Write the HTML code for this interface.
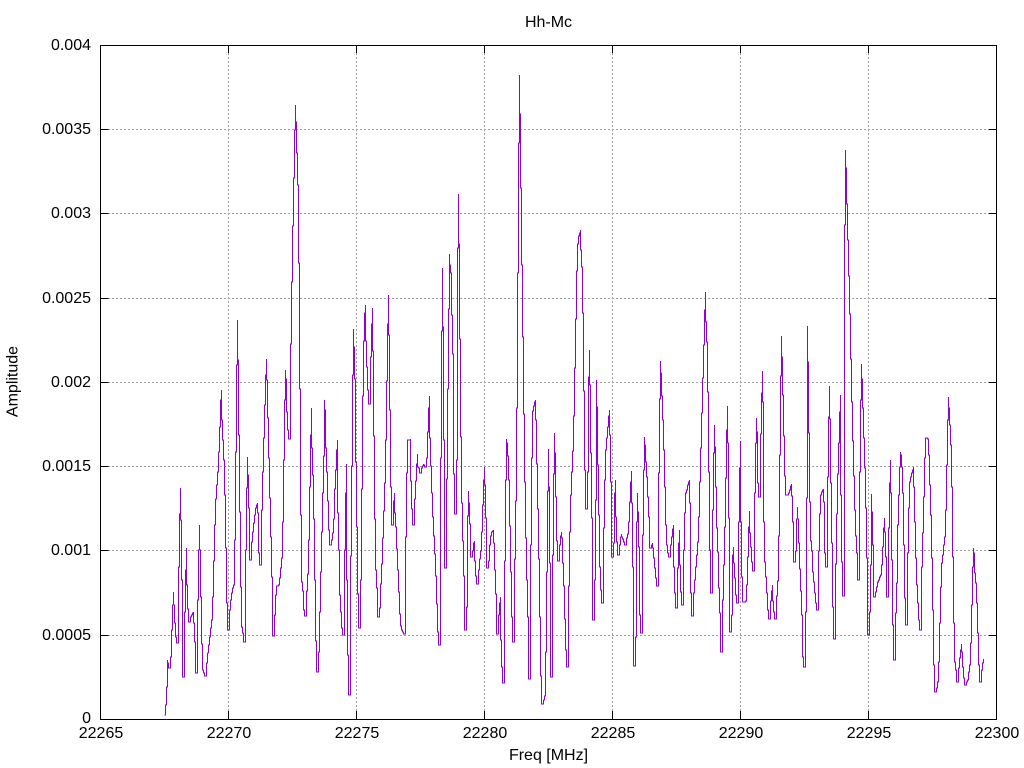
<!DOCTYPE html>
<html>
<head>
<meta charset="utf-8">
<title>Hh-Mc</title>
<style>
html,body{margin:0;padding:0;background:#fff;width:1024px;height:768px;overflow:hidden}
svg{display:block}
text{font-family:"Liberation Sans",sans-serif;font-size:16px;fill:#000}
</style>
</head>
<body>
<svg width="1024" height="768" viewBox="0 0 1024 768" xmlns="http://www.w3.org/2000/svg">
<rect width="1024" height="768" fill="#fff"/>
<g stroke="#a0a0a0" stroke-width="1" stroke-dasharray="2 2" fill="none" shape-rendering="crispEdges">
<path d="M108 129.5H988M108 213.5H988M108 298.5H988M108 382.5H988M108 466.5H988M108 550.5H988M108 635.5H988"/>
<path d="M228.5 53V711M356.5 53V711M484.5 53V711M612.5 53V711M740.5 53V711M868.5 53V711"/>
</g>
<path fill="none" stroke="#9400d3" stroke-width="1" shape-rendering="crispEdges" d="M164.5 715h1V705h1V687h1V660V663h1V668h1h1V657h1V630h1V605h1V592V605h1V623h1V637h1V643h1h1V567h1V514h1V488V520h1V580h1V677h1h1V612h1V570h1V548V585h1V609h1V622h1h1V617h1V615h1V613h1V612V623h1V642h1V673h1h1V600h1V550h1V525V550h1V597h1V644h1V670h1V673h1V676h1h1V663h1V653h1V645h1V637h1V628h1V620h1V597h1V561h1V525h1V499h1V485h1V472h1V452h1V427h1V400h1V390V420h1V440h1V460h1V495h1V548h1V603h1V630h1h1V610h1V600h1V593h1V588h1V585h1V540h1V452h1V365h1V320V360h1V435h1V512h1V587h1V627h1V633h1V642h1h1V550h1V488h1V457V475h1V508h1V560h1h1V542h1V532h1V523h1V515h1V508h1V505h1V503V513h1V553h1V565h1h1V510h1V472h1V438h1V405h1V375h1V359V380h1V418h1V458h1V498h1V537h1V577h1V636h1h1V615h1V595h1V586V586h1h1V585h1V578h1V568h1V558h1V522h1V460h1V400h1V370V379h1V412h1V430h1V439h1h1V344h1V282h1V226h1V178h1V130h1V105V122h1V153h1V185h1V263h1V389h1V515h1V582h1V591h1V610h1V616h1h1V591h1V574h1V540h1V487h1V435h1V408V448h1V475h1V519h1V580h1V641h1V672h1h1V652h1V612h1V572h1V532h1V493h1V456h1V400V410h1V448h1V472h1V501h1V530h1V545h1h1V540h1V533h1V519h1V489h1V470h1V450h1V440V513h1V550h1V595h1V612h1V628h1V635h1h1V550h1V493h1V464V580h1V655h1V695h1h1V556h1V466h1V375h1V329V347h1V379h1V462h1V527h1V594h1V628h1h1V580h1V489h1V396h1V341h1V313h1V305V341h1V367h1V390h1V404h1h1V357h1V324h1V308V351h1V436h1V519h1V570h1V588h1V617h1h1V608h1V584h1V564h1V538h1V511h1V483h1V440h1V381h1V324h1V295V335h1V410h1V487h1V525h1h1V501h1V493V513h1V527h1V549h1V570h1V592h1V614h1V626h1V630h1V632h1V634h1h1V537h1V473h1V440V440h1V440h1h1V439V481h1V509h1V525h1h1V499h1V481h1V464h1V454V467h1V468h1V473h1h1V468h1V466h1V464V465h1V467h1h1V458h1V432h1V408h1V396V438h1V466h1V493h1V517h1V536h1V554h1V576h1V604h1V632h1V645h1h1V458h1V331h1V268V327h1V440h1V568h1h1V479h1V389h1V309h1V254V265h1V273h1V315h1V354h1V474h1V514h1h1V460h1V248h1V194V244h1V339h1V437h1V503h1V541h1V576h1V630h1h1V607h1V516h1V491V503h1V524h1V557h1h1V551h1V543h1V541V561h1V576h1V584h1h1V570h1V559h1V551h1V532h1V505h1V480h1V467V485h1V518h1V568h1h1V561h1V545h1V536h1V532h1V531h1V530V543h1V570h1V594h1V634h1h1V615h1V603h1V597V640h1V667h1V683h1h1V561h1V480h1V439V443h1V456h1V480h1V526h1V572h1V617h1V642h1h1V559h1V501h1V408h1V273h1V143h1V75V114h1V188h1V265h1V337h1V414h1V482h1V538h1V580h1V617h1V679h1h1V545h1V458h1V411h1V406h1V402h1V400V420h1V464h1V509h1V559h1V617h1V676h1V704h1h1V700h1V696h1V652h1V572h1V491h1V449V487h1V563h1V677h1h1V555h1V474h1V433V453h1V497h1V541h1V561h1h1V545h1V536h1V532V538h1V563h1V586h1V619h1V650h1V667h1h1V586h1V532h1V495h1V472h1V451h1V416h1V368h1V319h1V271h1V244h1V236h1V233h1V230V250h1V267h1V313h1V391h1V470h1V509h1h1V472h1V377h1V350V385h1V453h1V518h1V620h1h1V580h1V500h1V380V407h1V465h1V515h1V567h1V590h1V603h1h1V528h1V480h1V450h1V438h1V427h1V416h1V410V435h1V482h1V557h1h1V543h1V493h1V480V517h1V542h1V555h1h1V545h1V537h1V534V537h1V539h1V542h1V545h1h1V538h1V534h1V522h1V502h1V482h1V471V503h1V567h1V666h1h1V637h1V522h1V493V512h1V547h1V615h1V633h1h1V535h1V470h1V437V445h1V462h1V477h1V497h1V517h1V548h1h1V545h1V543V548h1V558h1V568h1V578h1V586h1h1V473h1V399h1V361V373h1V396h1V420h1V450h1V487h1V525h1V545h1V553h1V557h1h1V545h1V537h1V529h1V525V567h1V593h1V608h1h1V568h1V543h1V530V565h1V592h1V605h1h1V550h1V513h1V493h1V490h1V485h1V482h1V480V503h1V593h1V616h1h1V593h1V580h1V567h1V555h1V542h1V517h1V482h1V448h1V413h1V378h1V345h1V310h1V292V322h1V342h1V392h1V472h1V550h1V593h1h1V510h1V453h1V425V447h1V487h1V528h1V552h1V588h1V613h1V652h1h1V600h1V565h1V527h1V478h1V430h1V406V443h1V518h1V632h1h1V615h1V555h1V547V563h1V578h1V595h1V603h1h1V522h1V468h1V441V522h1V577h1V602h1V602h1h1V601h1V585h1V557h1V527h1V511V533h1V547h1V562h1V571h1h1V493h1V443h1V418V432h1V483h1V497h1h1V434h1V393h1V371V402h1V522h1V562h1V577h1V593h1V610h1V619h1h1V601h1V591h1V585V601h1V612h1V619h1h1V596h1V581h1V536h1V455h1V376h1V336V357h1V395h1V436h1V476h1V495h1V495h1h1V493h1V490h1V486h1V484V496h1V522h1V562h1h1V551h1V519h1V507V519h1V543h1V569h1V591h1V615h1V657h1V667h1h1V612h1V498h1V326V362h1V433h1V502h1V541h1V551h1V572h1V582h1V593h1V603h1V610h1h1V551h1V514h1V495h1V492h1V490h1V489V502h1V553h1V567h1h1V477h1V417h1V386V419h1V483h1V543h1V607h1V639h1h1V564h1V514h1V474h1V443h1V412h1V395V495h1V562h1V596h1h1V225h1V150V168h1V204h1V240h1V276h1V314h1V359h1V402h1V441h1V476h1V510h1V536h1V553h1V580h1h1V472h1V400h1V364V379h1V408h1V438h1V468h1V508h1V558h1V635h1h1V612h1V565h1V494V512h1V545h1V597h1h1V592h1V587h1V582h1V580h1V577h1V575h1V565h1V547h1V528h1V518V532h1V557h1V597h1h1V528h1V483h1V460V493h1V560h1V625h1V660h1h1V613h1V583h1V525h1V495h1V467h1V452V455h1V467h1V493h1V545h1V598h1V625h1h1V553h1V508h1V482h1V477h1V473h1V470h1V467V487h1V522h1V558h1V585h1V603h1V620h1V630h1h1V567h1V533h1V497h1V458h1V438V438h1V438h1V439h1V455h1V485h1V515h1V558h1V610h1V665h1V692h1h1V688h1V682h1V662h1V623h1V587h1V563h1V555h1V545h1V537h1V510h1V465h1V420h1V397V408h1V425h1V445h1V487h1V557h1V623h1V662h1V670h1V682h1h1V668h1V658h1V650h1V644V652h1V667h1V678h1V685h1h1V682h1V680h1V672h1V665h1V643h1V605h1V567h1V548V553h1V573h1V583h1V603h1V633h1V665h1V682h1h1V670h1V663h1V659"/>
<g stroke="#000" stroke-width="1" fill="none" shape-rendering="crispEdges">
<rect x="100.5" y="45.5" width="896" height="674"/>
<path d="M100.5 129.5h8M100.5 213.5h8M100.5 298.5h8M100.5 382.5h8M100.5 466.5h8M100.5 550.5h8M100.5 635.5h8"/>
<path d="M996.5 129.5h-8M996.5 213.5h-8M996.5 298.5h-8M996.5 382.5h-8M996.5 466.5h-8M996.5 550.5h-8M996.5 635.5h-8"/>
<path d="M228.5 719v-8M356.5 719v-8M484.5 719v-8M612.5 719v-8M740.5 719v-8M868.5 719v-8"/>
<path d="M228.5 45v8M356.5 45v8M484.5 45v8M612.5 45v8M740.5 45v8M868.5 45v8"/>
</g>
<g text-anchor="end">
<text x="91" y="50">0.004</text>
<text x="91" y="134">0.0035</text>
<text x="91" y="218">0.003</text>
<text x="91" y="303">0.0025</text>
<text x="91" y="387">0.002</text>
<text x="91" y="471">0.0015</text>
<text x="91" y="555">0.001</text>
<text x="91" y="640">0.0005</text>
<text x="91" y="723">0</text>
</g>
<g text-anchor="middle">
<text x="101" y="738">22265</text>
<text x="229" y="738">22270</text>
<text x="357" y="738">22275</text>
<text x="485" y="738">22280</text>
<text x="613" y="738">22285</text>
<text x="741" y="738">22290</text>
<text x="869" y="738">22295</text>
<text x="997" y="738">22300</text>
<text x="548.5" y="27">Hh-Mc</text>
<text x="548.5" y="760">Freq [MHz]</text>
<text transform="translate(17.5 381.5) rotate(-90)">Amplitude</text>
</g>
</svg>
</body>
</html>
